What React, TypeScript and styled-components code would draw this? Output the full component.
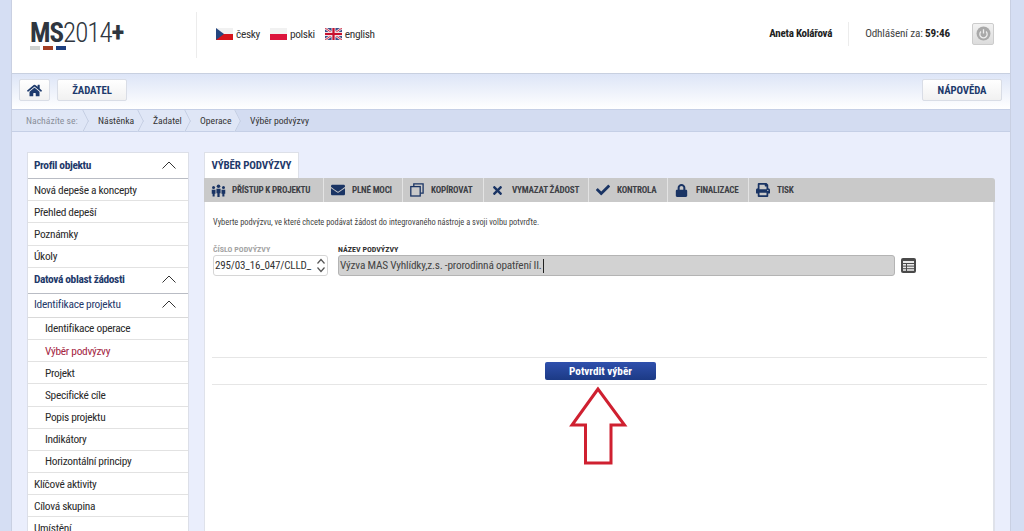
import React from "react";
import styled, { createGlobalStyle } from "styled-components";
import { FaHome, FaEnvelope, FaTimes, FaCheck, FaLock, FaPrint } from "react-icons/fa";

const FONT = `"Roboto Condensed", "Roboto", "Liberation Sans", sans-serif`;

const GlobalStyle = createGlobalStyle`
  html, body {
    margin: 0;
    height: 531px;
    overflow: hidden;
    background: #d5def3;
    font-family: ${FONT};
    font-stretch: 75%;
  }
  * { box-sizing: border-box; }
`;

const Page = styled.div`
  width: 1000px;
  height: 531px;
  margin-left: 11px;
  background: #eaeefc;
  border-left: 1px solid #c9d0e2;
  border-right: 1px solid #c9d0e2;
  overflow: hidden;
`;

const Header = styled.header`
  height: 74px;
  background: #fff;
  border-bottom: 1px solid #c8d0e0;
  display: flex;
  align-items: center;
`;

const LogoBox = styled.div`
  width: 185px;
  height: 46px;
  align-self: flex-start;
  margin-top: 12px;
  padding: 8px 0 0 18px;
  border-right: 1px solid #ececec;
`;

const LogoText = styled.div`
  font-size: 27px;
  line-height: 26px;
  letter-spacing: -1px;
  color: #2f3640;
  font-weight: 300;
  b { font-weight: 700; }
`;

const LogoBars = styled.div`
  display: flex;
  gap: 3px;
`;

const LogoBar = styled.span<{ $color: string }>`
  width: 10px;
  height: 4px;
  background: ${({ $color }) => $color};
`;

const Langs = styled.div`
  display: flex;
  gap: 10px;
  margin-left: 19px;
  margin-top: -6px;
`;

const Lang = styled.span`
  display: flex;
  align-items: center;
  gap: 3px;
  font-size: 11.4px;
  letter-spacing: -0.35px;
  color: #333;
`;

const HeaderRight = styled.div`
  display: flex;
  align-items: center;
  margin: -6px 16px 0 auto;
`;

const UserName = styled.span`
  font-size: 11px;
  letter-spacing: -0.25px;
  font-weight: 700;
  color: #222;
  padding-right: 16px;
  border-right: 1px solid #ececec;
  line-height: 24px;
`;

const Logout = styled.span`
  font-size: 11.2px;
  letter-spacing: -0.15px;
  color: #444;
  margin-left: 16px;
  margin-right: 22px;
  b { color: #222; }
`;

const PowerButton = styled.div`
  width: 22px;
  height: 22px;
  border: 1px solid #ccc;
  border-radius: 2px;
  background: linear-gradient(#f2f2f2, #dcdcdc);
  display: flex;
  align-items: center;
  justify-content: center;
`;

const Toolbar = styled.div`
  height: 35px;
  background: linear-gradient(#dde5f7, #fff);
  display: flex;
  align-items: center;
  padding: 0 8px 0 7px;
  gap: 7px;
`;

const ToolButton = styled.div<{ $width: number }>`
  width: ${({ $width }) => $width}px;
  height: 22px;
  margin-top: -3px;
  background: linear-gradient(#fff, #f1f1f1);
  border: 1px solid #d9dde6;
  border-radius: 2px;
  display: flex;
  align-items: center;
  justify-content: center;
  color: #1d3a6c;
  font-size: 10.8px;
  letter-spacing: -0.1px;
  font-weight: 700;
`;

const Spacer = styled.div`
  flex: 1;
`;

const Crumbs = styled.nav`
  height: 23px;
  background: #d3dcf1;
  border-top: 1px solid #c5cfe6;
  border-bottom: 1px solid #c5cfe6;
  display: flex;
  align-items: center;
  font-size: 9.7px;
  white-space: nowrap;
`;

const Crumb = styled.span<{ $width: number; $muted?: boolean; $first?: boolean }>`
  width: ${({ $width }) => $width}px;
  flex: none;
  height: 21px;
  line-height: 21px;
  padding-left: ${({ $first }) => ($first ? 14 : 15)}px;
  color: ${({ $muted }) => ($muted ? "#8a8f9a" : "#333")};
  position: relative;
  background: #dfe6f6;
  &::after {
    content: "";
    position: absolute;
    right: -7.5px;
    top: 3px;
    width: 15px;
    height: 15px;
    background: #dfe6f6;
    border-top: 1px solid #bcc6dc;
    border-right: 1px solid #bcc6dc;
    transform: scaleX(0.5) rotate(45deg);
    z-index: 1;
  }
  span {
    position: relative;
    z-index: 2;
  }
`;

const CrumbLast = styled.span`
  color: #333;
  padding-left: 15px;
`;

const Body = styled.div`
  display: flex;
  gap: 15px;
  padding: 20px 15px 0 15px;
  align-items: flex-start;
`;

const Sidebar = styled.aside`
  width: 162px;
  flex: none;
  background: #fff;
  border: 1px solid #dcdfe8;
  border-bottom: 0;
`;

const SectionRow = styled.div<{ $plain?: boolean }>`
  height: ${({ $plain }) => ($plain ? 24 : 26)}px;
  display: flex;
  align-items: center;
  justify-content: space-between;
  padding: 0 12px 2px 6px;
  font-size: 11.4px;
  letter-spacing: ${({ $plain }) => ($plain ? -0.25 : -0.35)}px;
  font-weight: ${({ $plain }) => ($plain ? 400 : 700)};
  color: #1f3a6b;
  border-bottom: 1px solid ${({ $plain }) => ($plain ? "#d9d9d9" : "#b9bcc4")};
`;

const MenuRow = styled.div<{ $nested?: boolean; $active?: boolean }>`
  height: 22.2px;
  display: flex;
  align-items: center;
  padding-left: ${({ $nested }) => ($nested ? 17 : 6)}px;
  font-size: 11.4px;
  letter-spacing: -0.3px;
  color: ${({ $active }) => ($active ? "#a3243f" : "#2a2a2a")};
  border-bottom: 1px solid #e2e2e2;
`;

const Main = styled.main`
  flex: 1;
  min-width: 0;
`;

const Tab = styled.div`
  width: 95px;
  height: 26px;
  background: #fff;
  border: 1px solid #dde0e8;
  border-bottom: 0;
  display: flex;
  align-items: center;
  justify-content: center;
  color: #1f3a6b;
  font-size: 11px;
  letter-spacing: -0.15px;
  font-weight: 700;
  white-space: nowrap;
`;

const ActionBar = styled.div`
  height: 24px;
  background: #c9c9c9;
  border-radius: 0 3px 0 0;
  display: flex;
`;

const Action = styled.div<{ $width?: number }>`
  display: flex;
  align-items: center;
  width: ${({ $width }) => ($width ? `${$width}px` : "auto")};
  padding-left: 7px;
  height: 24px;
  border-right: ${({ $width }) => ($width ? "1px solid #e3e3e3" : "0")};
  font-size: 9.1px;
  letter-spacing: -0.2px;
  font-weight: 700;
  color: #3d3f45;
  white-space: nowrap;
`;

const ActionIcon = styled.span`
  width: 21px;
  flex: none;
  display: flex;
  align-items: center;
  color: #1a3464;
`;

const Card = styled.div`
  height: 330px;
  background: #fff;
  border-left: 1px solid #dfe2ea;
  border-right: 2px solid #dfe2ea;
  padding: 14px 7px 0 8px;
`;

const Hint = styled.p`
  margin: 0;
  font-size: 8.35px;
  line-height: 12px;
  color: #444;
`;

const FormRow = styled.div`
  display: flex;
  align-items: flex-end;
  margin-top: 16px;
  height: 32px;
`;

const Field = styled.div<{ $width: number }>`
  width: ${({ $width }) => $width}px;
  margin-right: 10px;
`;

const FieldLabel = styled.label<{ $muted?: boolean }>`
  display: block;
  font-size: 8px;
  font-weight: 700;
  line-height: 11px;
  color: ${({ $muted }) => ($muted ? "#a4a4a4" : "#333")};
`;

const SelectBox = styled.div`
  height: 21px;
  border: 1px solid #d6d6d6;
  border-radius: 3px;
  display: flex;
  align-items: center;
  justify-content: space-between;
  padding: 0 1px 0 1px;
  font-size: 11px;
  color: #333;
  letter-spacing: -0.15px;
`;

const ReadOnly = styled.div`
  height: 21px;
  background: #d2d2d2;
  border: 1px solid #b4b4b4;
  border-radius: 3px;
  display: flex;
  align-items: center;
  padding-left: 1px;
  font-size: 11.3px;
  letter-spacing: -0.2px;
  color: #444;
`;

const Caret = styled.span`
  display: inline-block;
  width: 1px;
  height: 14px;
  background: #222;
  margin-left: 1px;
`;

const ListButton = styled.div`
  width: 15px;
  height: 15px;
  margin-bottom: 3px;
  margin-left: -4px;
  border-radius: 2px;
  background: #4a4a4a;
  display: flex;
  align-items: center;
  justify-content: center;
`;

const Confirm = styled.div`
  margin: 81px -1px 0;
  height: 28px;
  border-top: 1px solid #e6e6e6;
  border-bottom: 1px solid #e6e6e6;
  display: flex;
  align-items: center;
  justify-content: center;
  position: relative;
`;

const ConfirmButton = styled.button`
  width: 111px;
  height: 18px;
  margin-left: 2px;
  padding: 0;
  border: 0;
  border-radius: 2px;
  background: linear-gradient(#2f50ad, #1c3a85);
  color: #fff;
  font-family: ${FONT};
  font-stretch: 75%;
  font-size: 11.2px;
  font-weight: 700;
`;

const ArrowMark = styled.svg`
  position: absolute;
  left: 357px;
  top: 27px;
`;

const Czech = () => (
  <svg width="17" height="12" viewBox="0 0 17 12">
    <rect width="17" height="6" fill="#f1f1f1" />
    <rect y="6" width="17" height="6" fill="#d7141a" />
    <path d="M0 0L8 6L0 12Z" fill="#25467f" />
  </svg>
);

const Polish = () => (
  <svg width="17" height="12" viewBox="0 0 17 12">
    <rect width="17" height="6" fill="#f1f1f1" />
    <rect y="6" width="17" height="6" fill="#dc143c" />
  </svg>
);

const English = () => (
  <svg width="17" height="12" viewBox="0 0 17 12">
    <rect width="17" height="12" fill="#3c4f8a" />
    <path d="M0 0L17 12M17 0L0 12" stroke="#f3dfe3" strokeWidth="2.4" />
    <path d="M0 0L17 12M17 0L0 12" stroke="#c8102e" strokeWidth="0.8" />
    <path d="M8.5 0V12M0 6H17" stroke="#f3dfe3" strokeWidth="4" />
    <path d="M8.5 0V12M0 6H17" stroke="#c8102e" strokeWidth="2.2" />
  </svg>
);

const Power = () => (
  <svg width="15" height="15" viewBox="0 0 14 14">
    <circle cx="7" cy="7" r="6.5" fill="#a9a9a9" />
    <path d="M4.6 5.2A3.4 3.4 0 1 0 9.4 5.2" fill="none" stroke="#eee" strokeWidth="1.2" />
    <path d="M7 3V7" stroke="#eee" strokeWidth="1.2" />
  </svg>
);

const Chevron = () => (
  <svg width="14" height="8" viewBox="0 0 14 8">
    <path d="M0.5 7.5L7 1L13.5 7.5" fill="none" stroke="#333" strokeWidth="1" />
  </svg>
);

const People = () => (
  <svg width="15" height="15" viewBox="0 0 16 14" fill="currentColor">
    <circle cx="8" cy="2.4" r="1.9" />
    <path d="M5.8 5H10.2L10.2 10H9.2V14H6.8V10H5.8Z" />
    <circle cx="2.7" cy="3.8" r="1.6" />
    <path d="M0.8 6.2H4.8V10.4H3.9V13.4H1.7V10.4H0.8Z" />
    <circle cx="13.3" cy="3.8" r="1.6" />
    <path d="M11.2 6.2H15.2V10.4H14.3V13.4H12.1V10.4H11.2Z" />
  </svg>
);

const Clone = () => (
  <svg width="14" height="14" viewBox="0 0 14 14" fill="none" stroke="currentColor" strokeWidth="1.3">
    <rect x="0.8" y="3.6" width="9.4" height="9.4" />
    <path d="M3.8 3.4V0.9H13.1V10.2H10.4" />
  </svg>
);

const ListIcon = () => (
  <svg width="11" height="10" viewBox="0 0 11 10" fill="#e8e8e8">
    <rect x="0" y="0" width="11" height="2" />
    <rect x="0" y="3" width="3" height="1.6" />
    <rect x="4" y="3" width="7" height="1.6" />
    <rect x="0" y="5.6" width="3" height="1.6" />
    <rect x="4" y="5.6" width="7" height="1.6" />
    <rect x="0" y="8.2" width="3" height="1.6" />
    <rect x="4" y="8.2" width="7" height="1.6" />
  </svg>
);

const Stepper = () => (
  <svg width="10" height="15" viewBox="0 0 10 15" fill="none" stroke="#555" strokeWidth="1.2">
    <path d="M1.5 5.5L5 1.5L8.5 5.5" />
    <path d="M1.5 9.5L5 13.5L8.5 9.5" />
  </svg>
);

const actions = [
  { icon: <People />, label: "PŘÍSTUP K PROJEKTU", width: 120 },
  { icon: <FaEnvelope size={14} />, label: "PLNÉ MOCI", width: 79 },
  { icon: <Clone />, label: "KOPÍROVAT", width: 81 },
  { icon: <FaTimes size={13} />, label: "VYMAZAT ŽÁDOST", width: 105 },
  { icon: <FaCheck size={14} />, label: "KONTROLA", width: 79 },
  { icon: <FaLock size={13} />, label: "FINALIZACE", width: 81 },
  { icon: <FaPrint size={14} />, label: "TISK" },
];

export default function App() {
  return (
    <>
      <GlobalStyle />
      <Page>
        <Header>
          <LogoBox>
            <LogoText>
              <b>MS</b>2014<b>+</b>
            </LogoText>
            <LogoBars>
              <LogoBar $color="#cfd2cf" />
              <LogoBar $color="#a33d22" />
              <LogoBar $color="#1d3f7f" />
            </LogoBars>
          </LogoBox>
          <Langs>
            <Lang><Czech /> česky</Lang>
            <Lang><Polish /> polski</Lang>
            <Lang><English /> english</Lang>
          </Langs>
          <HeaderRight>
            <UserName>Aneta Kolářová</UserName>
            <Logout>Odhlášení za: <b>59:46</b></Logout>
            <PowerButton><Power /></PowerButton>
          </HeaderRight>
        </Header>
        <Toolbar>
          <ToolButton $width={31}><FaHome size={15} /></ToolButton>
          <ToolButton $width={70}>ŽADATEL</ToolButton>
          <Spacer />
          <ToolButton $width={80}>NÁPOVĚDA</ToolButton>
        </Toolbar>
        <Crumbs>
          <Crumb $width={71} $muted $first><span>Nacházíte se:</span></Crumb>
          <Crumb $width={55}><span>Nástěnka</span></Crumb>
          <Crumb $width={47}><span>Žadatel</span></Crumb>
          <Crumb $width={50}><span>Operace</span></Crumb>
          <CrumbLast>Výběr podvýzvy</CrumbLast>
        </Crumbs>
        <Body>
          <Sidebar>
            <SectionRow>Profil objektu <Chevron /></SectionRow>
            <MenuRow>Nová depeše a koncepty</MenuRow>
            <MenuRow>Přehled depeší</MenuRow>
            <MenuRow>Poznámky</MenuRow>
            <MenuRow>Úkoly</MenuRow>
            <SectionRow>Datová oblast žádosti <Chevron /></SectionRow>
            <SectionRow $plain>Identifikace projektu <Chevron /></SectionRow>
            <MenuRow $nested>Identifikace operace</MenuRow>
            <MenuRow $nested $active>Výběr podvýzvy</MenuRow>
            <MenuRow $nested>Projekt</MenuRow>
            <MenuRow $nested>Specifické cíle</MenuRow>
            <MenuRow $nested>Popis projektu</MenuRow>
            <MenuRow $nested>Indikátory</MenuRow>
            <MenuRow $nested>Horizontální principy</MenuRow>
            <MenuRow>Klíčové aktivity</MenuRow>
            <MenuRow>Cílová skupina</MenuRow>
            <MenuRow>Umístění</MenuRow>
          </Sidebar>
          <Main>
            <Tab>VÝBĚR PODVÝZVY</Tab>
            <ActionBar>
              {actions.map(a => (
                <Action key={a.label} $width={a.width}>
                  <ActionIcon>{a.icon}</ActionIcon>
                  {a.label}
                </Action>
              ))}
            </ActionBar>
            <Card>
              <Hint>Vyberte podvýzvu, ve které chcete podávat žádost do integrovaného nástroje a svoji volbu potvrďte.</Hint>
              <FormRow>
                <Field $width={115}>
                  <FieldLabel $muted>ČÍSLO PODVÝZVY</FieldLabel>
                  <SelectBox>
                    295/03_16_047/CLLD_
                    <Stepper />
                  </SelectBox>
                </Field>
                <Field $width={557}>
                  <FieldLabel>NÁZEV PODVÝZVY</FieldLabel>
                  <ReadOnly>
                    Výzva MAS Vyhlídky,z.s. -prorodinná opatření II.
                    <Caret />
                  </ReadOnly>
                </Field>
                <ListButton><ListIcon /></ListButton>
              </FormRow>
              <Confirm>
                <ConfirmButton>Potvrdit výběr</ConfirmButton>
                <ArrowMark width="60" height="82" viewBox="0 0 60 82">
                  <path
                    d="M29 4L3 40H16.5V78H42V40H55.5Z"
                    fill="#fff"
                    stroke="#cf2030"
                    strokeWidth="3"
                  />
                </ArrowMark>
              </Confirm>
            </Card>
          </Main>
        </Body>
      </Page>
    </>
  );
}
